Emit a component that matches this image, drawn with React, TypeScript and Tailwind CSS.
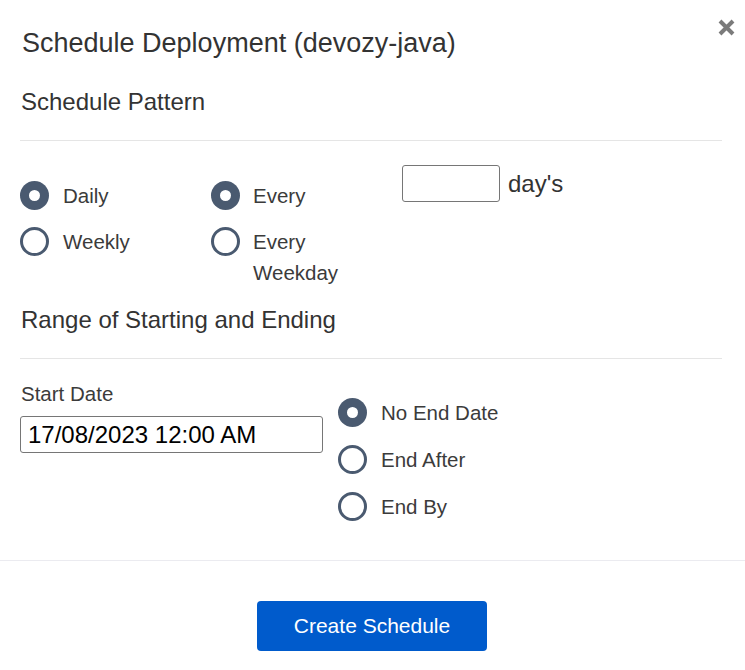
import React from "react";

function Radio({ checked }: { checked?: boolean }) {
  return checked ? (
    <span className="mt-[1px] flex h-[29px] w-[29px] shrink-0 items-center justify-center rounded-full bg-[#4a5a70]">
      <span className="h-[11px] w-[11px] rounded-full bg-white" />
    </span>
  ) : (
    <span className="mt-[1px] h-[29px] w-[29px] shrink-0 rounded-full border-[3px] border-[#4a5a70] bg-white" />
  );
}

function Option({ checked, children, gap = "gap-[14px]" }: { checked?: boolean; children: React.ReactNode; gap?: string }) {
  return (
    <div className={`flex items-start ${gap}`}>
      <Radio checked={checked} />
      <span className="text-[20.5px] leading-[31px] text-[#3b3b3b]">{children}</span>
    </div>
  );
}

export default function App() {
  return (
    <div className="relative h-[670px] w-[745px] overflow-hidden bg-white font-['Liberation_Sans',Arial,sans-serif]">
      <button className="absolute right-[10px] top-[19px] flex h-[17px] w-[17px] items-center justify-center" aria-label="Close">
        <svg width="17" height="17" viewBox="0 0 17 17">
          <path d="M2 2 L15 15 M15 2 L2 15" stroke="#7b7b7b" strokeWidth="4" strokeLinecap="butt" />
        </svg>
      </button>

      <div className="pl-[22px] pt-[28px] text-[27px] leading-[30px] text-[#333]">Schedule Deployment (devozy-java)</div>

      <div className="ml-[20px] mr-[23px]">
        <div className="mt-[30px] pl-[1px] text-[24px] leading-[28px] text-[#333]">Schedule Pattern</div>
        <div className="mt-[24px] border-t border-[#e5e5e5]" />

        <div className="mt-[24px] flex">
          <div className="flex w-[191px] flex-col gap-[15px] pt-[15px]">
            <Option checked>Daily</Option>
            <Option>Weekly</Option>
          </div>
          <div className="flex w-[191px] flex-col gap-[15px] pt-[15px]">
            <Option checked gap="gap-[13px]">Every</Option>
            <Option gap="gap-[13px]">
              Every
              <br />
              Weekday
            </Option>
          </div>
          <div className="flex items-center gap-[8px] self-start">
            <input className="h-[37px] w-[98px] rounded-[3px] border border-[#767676] bg-white px-[6px] text-[20px] outline-none" />
            <span className="text-[24px] leading-[28px] text-[#333]">day's</span>
          </div>
        </div>

        <div className="mt-[18px] pl-[1px] text-[24px] leading-[28px] text-[#333]">Range of Starting and Ending</div>
        <div className="mt-[24px] border-t border-[#e5e5e5]" />

        <div className="mt-[23px] flex gap-[15px]">
          <div className="flex w-[303px] flex-col">
            <div className="pl-[1px] text-[20.5px] leading-[24px] text-[#3b3b3b]">Start Date</div>
            <input
              className="mt-[10px] h-[37px] w-[303px] rounded-[3px] border border-[#767676] bg-white pl-[7px] text-[24px] text-black outline-none"
              defaultValue="17/08/2023 12:00 AM"
            />
          </div>
          <div className="flex flex-col gap-[16px] pt-[15px]">
            <Option checked>No End Date</Option>
            <Option>End After</Option>
            <Option>End By</Option>
          </div>
        </div>
      </div>

      <div className="mt-[38px] border-t border-[#ebebf0]" />

      <div className="mt-[40px] flex justify-center pr-[1px]">
        <button className="h-[50px] w-[230px] rounded-[4px] bg-[#005bcc] text-[21px] text-white">Create Schedule</button>
      </div>
    </div>
  );
}
